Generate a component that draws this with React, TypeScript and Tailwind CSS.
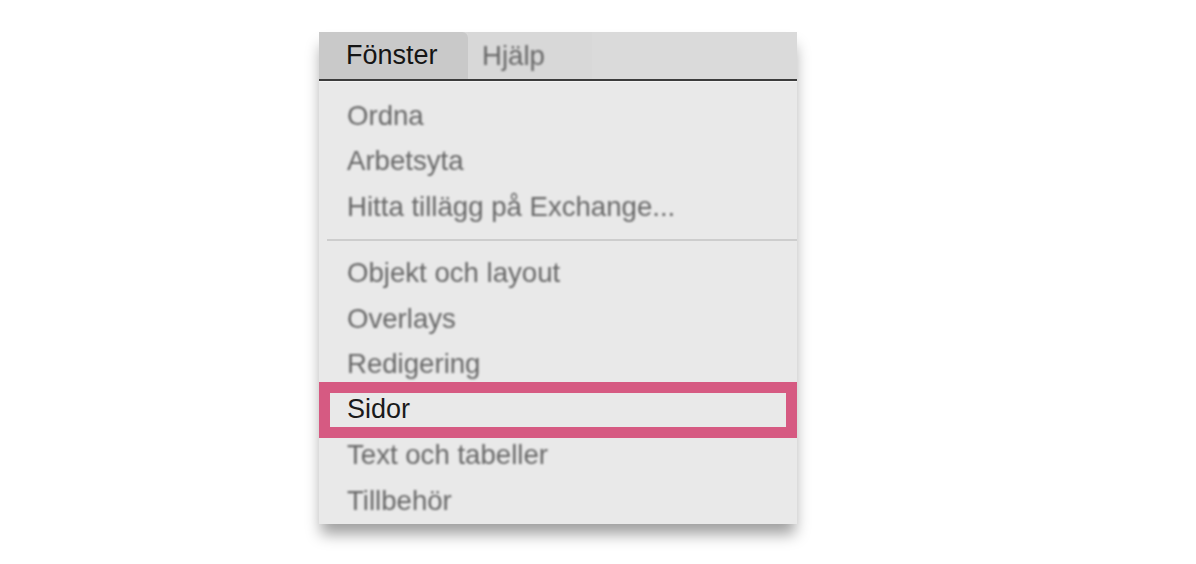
import React from "react";

const grey = "text-[#676767] blur-[1.3px] text-[27.6px]";

function Row({ label, dim = true }: { label: string; dim?: boolean }) {
  return (
    <div className="h-[45.5px] flex items-center pl-[28px]">
      <span className={dim ? grey : "text-[#1a1a1a]"}>{label}</span>
    </div>
  );
}

export default function App() {
  return (
    <div
      className="w-[1196px] h-[564px] bg-white pt-[32px] pl-[319px]"
      style={{ fontFamily: '"Liberation Sans", Arial, sans-serif' }}
    >
      <div className="w-[478px] bg-[#e9e9e9] shadow-[0_12px_14px_-2px_rgba(0,0,0,0.38)] text-[27px] leading-none">
        <div className="h-[49px] bg-[#dadada] flex items-stretch border-b-2 border-[#3c3c3c]">
          <div className="w-[149px] bg-[#c9c9c9] rounded-tr-[6px] flex items-center pl-[27px] text-[#151515]">
            Fönster
          </div>
          <div className="w-[124px] bg-[#d8d8d8] flex items-center pl-[14px]">
            <span className={grey}>Hjälp</span>
          </div>
        </div>
        <div className="pt-[11px] border-t border-[#f4f4f4]">
          <Row label="Ordna" />
          <Row label="Arbetsyta" />
          <Row label="Hitta tillägg på Exchange..." />
          <div className="h-[21px] flex items-center pl-[8px]">
            <div className="h-[1.5px] w-full bg-[#cdcdcd]" />
          </div>
          <Row label="Objekt och layout" />
          <Row label="Overlays" />
          <Row label="Redigering" />
          <div className="relative">
            <Row label="Sidor" dim={false} />
            <div className="absolute -top-[5px] -bottom-[5px] left-0 right-0 border-[11px] border-[#d65a82]" />
          </div>
          <Row label="Text och tabeller" />
          <Row label="Tillbehör" />
        </div>
      </div>
    </div>
  );
}
